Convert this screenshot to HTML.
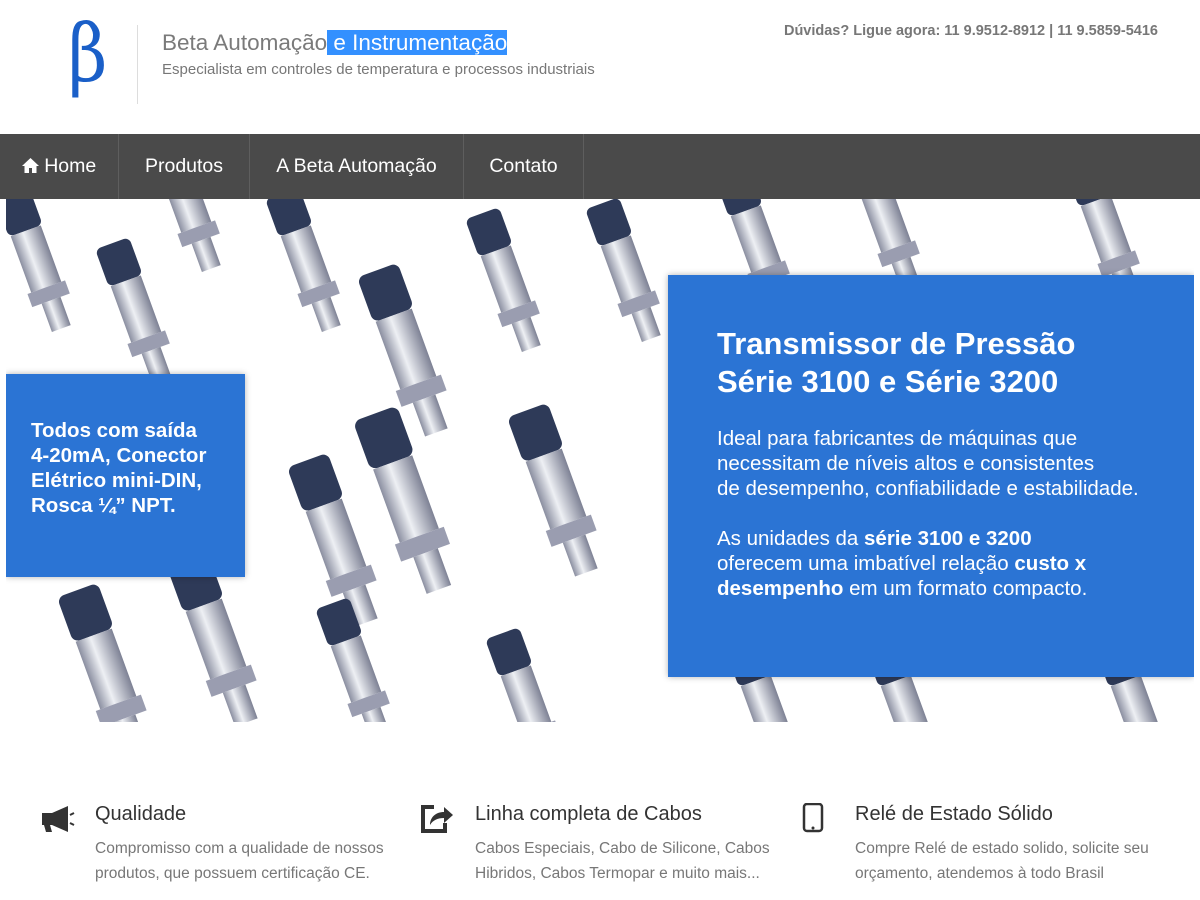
<!DOCTYPE html>
<html><head><meta charset="utf-8"><style>
*{margin:0;padding:0;box-sizing:border-box}
body{width:1200px;height:900px;background:#fff;font-family:"Liberation Sans",sans-serif;position:relative;overflow:hidden}
.abs{position:absolute}
.beta{left:68px;top:14px;font-family:"DejaVu Serif",serif;font-size:80px;color:#1a5fc8;line-height:1;transform:scaleX(.85);transform-origin:left}
.vline{left:137px;top:25px;width:1px;height:79px;background:#ddd}
.t1{left:162px;top:30px;font-size:22.5px;color:#7a7a7a;white-space:nowrap}
.t1 span{background:#3390ff;color:#fff}
.t2{left:162px;top:61px;font-size:15px;color:#777;white-space:nowrap}
.phone{right:42px;top:23px;font-size:14.5px;font-weight:bold;color:#777}
nav{left:0;top:134px;width:1200px;height:65px;background:#4a4a4a}
nav div{position:absolute;top:0;height:65px;line-height:65px;color:#fff;font-size:19.5px;border-right:1px solid #5e5e5e;text-align:center}
.hero{left:6px;top:199px;width:1188px;height:523px;background:#fff;overflow:hidden}
.box{background:#2b74d4;color:#fff;font-weight:bold;box-shadow:0 0 6px rgba(0,0,0,.3)}
.feat h3{font-size:20px;font-weight:normal;color:#333;position:absolute;top:0;left:55px;white-space:nowrap}
.feat p{font-size:15.5px;color:#777;line-height:25px;position:absolute;top:33px;left:55px;width:320px}
</style></head><body>
<div class="abs beta">β</div>
<div class="abs vline"></div>
<div class="abs t1">Beta Automação<span> e Instrumentação</span></div>
<div class="abs t2">Especialista em controles de temperatura e processos industriais</div>
<div class="abs phone">Dúvidas? Ligue agora: 11 9.9512-8912 | 11 9.5859-5416</div>
<nav class="abs">
<div style="left:0;width:119px"><svg width="17" height="15" viewBox="0 0 17 15" style="vertical-align:-1px"><path d="M8.5 0L0 8h2.5v7h4.5v-5h3v5h4.5V8H17z" fill="#fff"/></svg> Home</div>
<div style="left:119px;width:131px">Produtos</div>
<div style="left:250px;width:214px">A Beta Automação</div>
<div style="left:464px;width:120px">Contato</div>
</nav>
<div class="abs hero">
<svg width="1188" height="523" viewBox="0 0 1188 523">
<defs>
<linearGradient id="m" x1="0" x2="1"><stop offset="0" stop-color="#8a8ea0"/><stop offset=".4" stop-color="#eef0f4"/><stop offset="1" stop-color="#7d8194"/></linearGradient>
<g id="s">
<rect x="-18" y="-70" width="36" height="40" rx="6" fill="#2e3a58"/>
<rect x="-16" y="-30" width="32" height="60" fill="url(#m)"/>
<rect x="-20" y="30" width="40" height="14" fill="#9a9db0"/>
<rect x="-10" y="44" width="20" height="30" fill="url(#m)"/>
</g>
</defs>
<g>
<use href="#s" transform="translate(30,60) rotate(-20)"/>
<use href="#s" transform="translate(130,110) rotate(-20)"/>
<use href="#s" transform="translate(180,0) rotate(-20)"/>
<use href="#s" transform="translate(300,60) rotate(-20)"/>
<use href="#s" transform="translate(400,150) rotate(-20) scale(1.2)"/>
<use href="#s" transform="translate(500,80) rotate(-20)"/>
<use href="#s" transform="translate(620,70) rotate(-20)"/>
<use href="#s" transform="translate(400,300) rotate(-20) scale(1.3)"/>
<use href="#s" transform="translate(330,340) rotate(-20) scale(1.2)"/>
<use href="#s" transform="translate(550,290) rotate(-20) scale(1.2)"/>
<use href="#s" transform="translate(210,440) rotate(-20) scale(1.2)"/>
<use href="#s" transform="translate(100,470) rotate(-20) scale(1.2)"/>
<use href="#s" transform="translate(350,470) rotate(-20)"/>
<use href="#s" transform="translate(520,500) rotate(-20)"/>
<use href="#s" transform="translate(750,40) rotate(-20)"/>
<use href="#s" transform="translate(880,20) rotate(-20)"/>
<use href="#s" transform="translate(1100,30) rotate(-20)"/>
<use href="#s" transform="translate(760,510) rotate(-20)"/>
<use href="#s" transform="translate(900,510) rotate(-20)"/>
<use href="#s" transform="translate(1130,510) rotate(-20)"/>
</g>
</svg>
<div class="abs box" style="left:0;top:175px;width:239px;height:203px;padding:44px 0 0 25px;font-size:20.5px;line-height:25px">Todos com saída<br>4-20mA, Conector<br>Elétrico mini-DIN,<br>Rosca ¼” NPT.</div>
<div class="abs box" style="left:662px;top:76px;width:526px;height:402px;padding:50px 0 0 49px">
<div style="font-size:31px;line-height:38px">Transmissor de Pressão<br>Série 3100 e Série 3200</div>
<div style="font-weight:normal;font-size:20.5px;line-height:25px;margin-top:25px;white-space:nowrap">Ideal para fabricantes de máquinas que<br>necessitam de níveis altos e consistentes<br>de desempenho, confiabilidade e estabilidade.<br><br>As unidades da <b>série 3100 e 3200</b><br>oferecem uma imbatível relação <b>custo x<br>desempenho</b> em um formato compacto.</div>
</div>
</div>
<div class="abs feat" style="left:40px;top:803px">
<svg class="abs" style="left:0;top:2px" width="36" height="28" viewBox="0 0 36 28"><path d="M2 8h10l16-7v26l-16-7h-2l2 7h-6l-2-7H2z" fill="#333"/><path d="M30 10l4-2M30 18l4 2" stroke="#333" stroke-width="2"/></svg>
<h3>Qualidade</h3><p>Compromisso com a qualidade de nossos produtos, que possuem certificação CE.</p></div>
<div class="abs feat" style="left:420px;top:803px">
<svg class="abs" style="left:0;top:0" width="34" height="30" viewBox="0 0 34 30"><path d="M14 4H3v24h22v-8" fill="none" stroke="#333" stroke-width="4"/><path d="M10 22c0-8 6-13 14-13V4l9 8-9 8v-5c-6 0-11 2-14 7z" fill="#333"/></svg>
<h3>Linha completa de Cabos</h3><p>Cabos Especiais, Cabo de Silicone, Cabos Hibridos, Cabos Termopar e muito mais...</p></div>
<div class="abs feat" style="left:800px;top:803px">
<svg class="abs" style="left:2px;top:0" width="22" height="30" viewBox="0 0 22 30"><rect x="2" y="1" width="18" height="27" rx="3" fill="none" stroke="#333" stroke-width="2.5"/><rect x="5" y="4" width="12" height="18" fill="#fff"/><circle cx="11" cy="25" r="1.5" fill="#333"/></svg>
<h3>Relé de Estado Sólido</h3><p>Compre Relé de estado solido, solicite seu orçamento, atendemos à todo Brasil</p></div>
</body></html>
